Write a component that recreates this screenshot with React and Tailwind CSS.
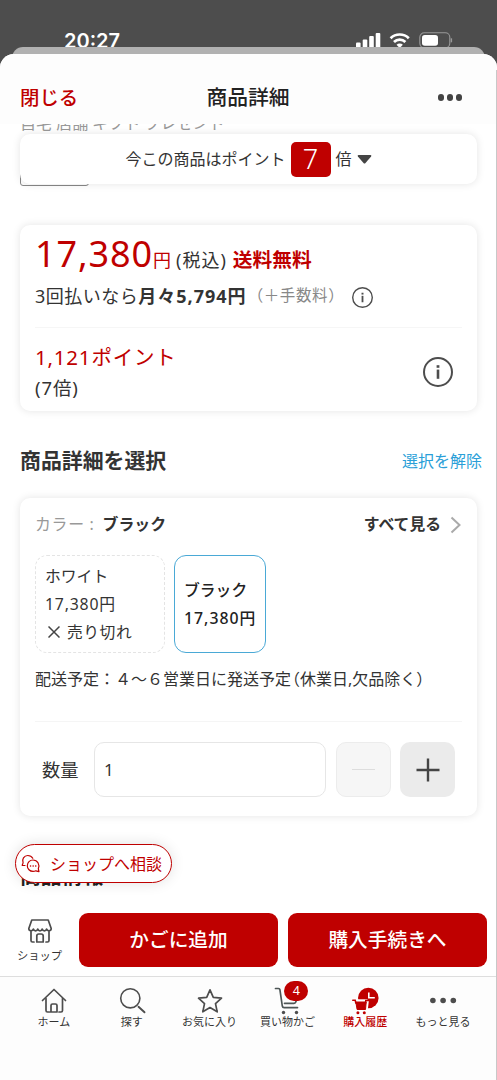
import React, { useState } from "react";

function InfoIcon({ size, stroke }) {
  return (
    <svg width={size} height={size} viewBox="0 0 30 30" fill="none" stroke="#4d4d4d" strokeWidth={stroke}>
      <circle cx="15" cy="15" r="14" />
      <path d="M15 12.6v9.2" strokeWidth={stroke * 1.3} />
      <path d="M15 8.2v2.6" strokeWidth={stroke * 1.4} />
    </svg>
  );
}

function StatusIcons() {
  return (
    <svg className="absolute left-[355px] top-[30px]" width="100" height="20" viewBox="0 0 100 20">
      <g fill="#fff">
        <rect x="1" y="12.5" width="4.6" height="8" rx="1" />
        <rect x="7.7" y="9.5" width="4.6" height="11" rx="1" />
        <rect x="14.2" y="6" width="4.6" height="14" rx="1" />
        <rect x="20.7" y="3" width="4.6" height="17" rx="1" />
      </g>
      <g fill="none" stroke="#fff" strokeWidth="2.7">
        <path d="M35.6 8.2a13 13 0 0 1 18.2 0" />
        <path d="M39 12a8 8 0 0 1 11.4 0" />
      </g>
      <path d="M41.5 14.8a4.6 4.6 0 0 1 6.4 0L44.7 18z" fill="#fff" />
      <rect x="64.8" y="2.8" width="30" height="15" rx="4.5" fill="none" stroke="#999" strokeWidth="1.1" />
      <rect x="67" y="5" width="16" height="10.8" rx="2.8" fill="#fff" />
      <path d="M96.4 8.3v4" stroke="#999" strokeWidth="1.4" />
    </svg>
  );
}

function ShopIcon() {
  return (
    <svg width="26" height="26" viewBox="0 0 26 26" fill="none" stroke="#4d4d4d" strokeWidth="1.7" strokeLinecap="round" strokeLinejoin="round">
      <path d="M4.8 2h16.4l3 8.500c0 2.800-3.900 3-4.600.6-.8 2.400-3.600 2.400-4.400 0-.8 2.400-3.600 2.400-4.400 0-.8 2.400-3.600 2.400-4.400 0-.7 2.400-4.600 2.200-4.600-.6z" />
      <path d="M4 13.500v9q0 1.500 1.500 1.500H7M22 13.500v9q0 1.500-1.500 1.500H19M9.800 24v-6q0-2 2-2h2.400q2 0 2 2v6z" />
    </svg>
  );
}

function ChatIcon() {
  return (
    <svg width="20" height="20" viewBox="0 0 20 20" fill="none" stroke="#bf0000" strokeWidth="1.2" strokeLinecap="round" strokeLinejoin="round">
      <path d="M4 11.500 1.200 11.300l.9-2.400C.6 5.500 3 1.500 6.800 1.500c2.300 0 4 1.100 5 2.800" />
      <path d="M12 6a5.700 5.700 0 1 0 0 11.400c1.100 0 2-.2 2.800-.6l3.200.8-.7-2.900C19 10.600 16.600 6 12 6z" />
      <path d="M9.500 11.900h.1M12.100 11.900h.1M14.700 11.900h.1" strokeWidth="1.500" />
    </svg>
  );
}

const tabIcons = {
  home: (
    <svg width="28" height="28" viewBox="0 0 28 28" fill="none" stroke="#4d4d4d" strokeWidth="1.7" strokeLinecap="round" strokeLinejoin="round">
      <path d="M2.500 13.500 14 2.500l11.500 11" />
      <path d="M6 11.500v12q0 1.500 1.500 1.500h2M22.500 11.500v12q0 1.500-1.500 1.500h-2M11 25v-6.500q0-1.500 1.500-1.500h3q1.500 0 1.500 1.500V25z" />
    </svg>
  ),
  search: (
    <svg width="28" height="28" viewBox="0 0 28 28" fill="none" stroke="#4d4d4d" strokeWidth="1.6" strokeLinecap="round">
      <circle cx="12.300" cy="11.300" r="9.600" />
      <path d="m20.500 19.800 6 5.500" strokeWidth="1.900" />
    </svg>
  ),
  star: (
    <svg width="28" height="28" viewBox="0 0 28 28" fill="none" stroke="#4d4d4d" strokeWidth="1.700" strokeLinejoin="round">
      <path d="m14 2.800 3.300 7.500 8.200.9-6 5.500 1.700 8.100-7.200-4.200-7.200 4.200 1.700-8.100-6-5.500 8.200-.9z" />
    </svg>
  ),
  cart: (
    <svg width="28" height="28" viewBox="0 0 28 28" fill="none" stroke="#4d5656" strokeWidth="1.700" strokeLinecap="round" strokeLinejoin="round">
      <path d="M2.500 1.500h3q1.200 0 1.400 1.200L9.300 19q.3 1.600 1.800 1.600H24.500M11.500 16.300H21q1.500 0 1.900-1.500l2.100-8" />
      <circle cx="10.500" cy="25.500" r="1.700" fill="#4d4d4d" stroke="none" />
      <circle cx="23.500" cy="25.500" r="1.700" fill="#4d4d4d" stroke="none" />
    </svg>
  ),
  history: (
    <svg width="28" height="28" viewBox="0 0 28 28" fill="none">
      <circle cx="17.300" cy="11" r="10.300" fill="#bf0000" />
      <path d="M17.800 5.500v5.300h6" stroke="#fff" strokeWidth="1.600" />
      <path d="M1.500 13h3l1.800 9.500h8.700l1-8.500" stroke="#fff" strokeWidth="3.600" />
      <path d="M5 14h11.500" stroke="#fff" strokeWidth="3.400" />
      <path d="M1.800 13.200h2.400l.6 2.800h9.700l.3-2.500h2" stroke="#bf0000" strokeWidth="1.600" strokeLinecap="round" />
      <path d="M4.800 15h10.400l-.7 7.500H6.100z" fill="#bf0000" stroke="#bf0000" strokeLinejoin="round" />
      <circle cx="6.900" cy="25.700" r="1.500" fill="#bf0000" />
      <circle cx="13.300" cy="25.700" r="1.500" fill="#bf0000" />
    </svg>
  ),
  more: (
    <svg width="28" height="28" viewBox="0 0 28 28" fill="#4d4d4d">
      <circle cx="3.900" cy="13.500" r="2.800" />
      <circle cx="14.100" cy="13.500" r="2.800" />
      <circle cx="24.300" cy="13.500" r="2.800" />
    </svg>
  ),
};

const tabs = [
  { id: "home", label: "ホーム" },
  { id: "search", label: "探す" },
  { id: "star", label: "お気に入り" },
  { id: "cart", label: "買い物かご", badge: 4 },
  { id: "history", label: "購入履歴", active: true },
  { id: "more", label: "もっと見る" },
];

function Header() {
  return (
    <header className="flex h-[70px] shrink-0 items-center justify-between rounded-t-[14px] bg-[#fdfdfd] pr-[35px] pl-5 pt-[17px]">
      <button className="w-20 text-left text-[19.400px] font-medium text-[#bf0000]">閉じる</button>
      <h1 className="pl-[14px] text-[20.800px] font-medium text-[#222]">商品詳細</h1>
      <button className="flex w-20 justify-end gap-[2.500px]">
        <span className="size-[6.500px] rounded-full bg-[#444]" />
        <span className="size-[6.500px] rounded-full bg-[#444]" />
        <span className="size-[6.500px] rounded-full bg-[#444]" />
      </button>
    </header>
  );
}

function PriceCard() {
  return (
    <section className="mr-5 ml-5 mt-[39px] h-[186px] shrink-0 rounded-[10px] bg-white px-[15px] shadow-[0_0_8px_rgba(0,0,0,0.11)]">
      <div className="flex h-[103px] flex-col border-b border-[#f6f6f6] pt-2">
        <div className="flex h-[43px] items-baseline whitespace-nowrap leading-[42px]">
          <span className="text-[36px] tracking-[0.900px] text-[#bf0000]">17,380</span>
          <span className="text-[18px] text-[#bf0000]">円</span>
          <span className="ml-[5px] text-[18px] tracking-[1px]">(税込)</span>
          <span className="ml-[6px] text-[19.700px] font-bold text-[#bf0000]">送料無料</span>
        </div>
        <div className="flex h-10 items-center whitespace-nowrap">
          <span className="text-[18px] tracking-[0.500px]">3回払いなら</span>
          <span className="text-[18px] font-bold tracking-[1px]">月々5,794円</span>
          <span className="ml-px text-[15.500px] tracking-[0.600px] text-[#888]">（＋手数料）</span>
          <span className="ml-2 pt-[2px]">
            <InfoIcon size={21} stroke={2} />
          </span>
        </div>
      </div>
      <div className="flex h-[83px] items-center justify-between pr-[9px]">
        <div className="flex flex-col pt-[6px]">
          <span className="h-[31px] text-[20.500px] leading-[31px] tracking-[0.800px] text-[#bf0000]">1,121ポイント</span>
          <span className="h-[30px] text-[18.500px] leading-[30px] tracking-[0.900px]">(7倍)</span>
        </div>
        <span className="pt-1">
          <InfoIcon size={30} stroke={2} />
        </span>
      </div>
    </section>
  );
}

function OptionCard() {
  const [count, setCount] = useState(1);

  return (
    <section className="mx-5 h-[318px] shrink-0 rounded-[10px] bg-white px-[15px] shadow-[0_0_8px_rgba(0,0,0,0.11)]">
      <div className="flex h-[57px] items-center justify-between pb-1">
        <p className="text-[15.900px] font-medium">
          <span className="mr-2 font-normal tracking-[0.700px] text-[#999]">カラー :</span>
          <span className="font-bold">ブラック</span>
        </p>
        <button className="flex items-center gap-[9px] text-[15.800px] font-bold">
          すべて見る
          <svg width="12" height="18" viewBox="0 0 12 18" fill="none" stroke="#aaa" strokeWidth="2">
            <path d="m1.500 1.500 8 7.500-8 7.500" />
          </svg>
        </button>
      </div>
      <div className="flex h-[98px] gap-[9px] text-[15.800px] leading-7">
        <button className="w-[130px] rounded-[12px] border border-dashed border-[#e4e4e4] pl-[9px] text-left">
          <span className="block">ホワイト</span>
          <span className="block tracking-[0.800px]">17,380円</span>
          <span className="flex items-center gap-[7px] pl-[3px]">
            <svg width="12" height="12" viewBox="0 0 12 12" stroke="#444" strokeWidth="1.500">
              <path d="m.5.5 11 11M11.500.5l-11 11" />
            </svg>
            <span className="tracking-[0.500px]">売り切れ</span>
          </span>
        </button>
        <button className="w-[92px] rounded-[12px] border-[1.500px] border-[#4aa9d6] pb-px pl-[9px] text-left font-medium whitespace-nowrap text-[#222]">
          <span className="block">ブラック</span>
          <span className="block tracking-[1px]">17,380円</span>
        </button>
      </div>
      <p className="h-[69px] border-b border-[#f5f5f5] pt-[14px] text-[16px] leading-6 whitespace-nowrap">
        配送予定：４〜６営業日に発送予定<span className="-ml-[7px]">（休業日,欠品除く）</span>
      </p>
      <div className="flex items-center pt-5 pl-[7px]">
        <label className="w-[52px] shrink-0 text-[18.300px]">数量</label>
        <input
          className="h-[55px] w-[232px] shrink-0 rounded-[10px] border border-[#e6e6e6] px-[9px] text-[17px] outline-none"
          value={count}
          onChange={(e) => setCount(Number(e.target.value) || 1)}
        />
        <button
          className="ml-[10px] flex size-[55px] shrink-0 items-center justify-center rounded-[10px] border border-[#ececec] bg-[#f6f6f6]"
          onClick={() => setCount(Math.max(1, count - 1))}
        >
          <span className="h-[1.500px] w-[23px] bg-[#ddd]" />
        </button>
        <button
          className="ml-[9px] flex size-[55px] shrink-0 items-center justify-center rounded-[10px] bg-[#ebebeb]"
          onClick={() => setCount(count + 1)}
        >
          <svg width="24" height="24" viewBox="0 0 24 24" stroke="#444" strokeWidth="2.400">
            <path d="M12 .5v23M.5 12h23" />
          </svg>
        </button>
      </div>
    </section>
  );
}

function TabBar() {
  return (
    <nav className="flex h-[104px] shrink-0 border-t-[1.500px] border-[#dedede] bg-[#fdfdfd] px-[15px] pt-[10px]">
      {tabs.map((tab) => (
        <a key={tab.id} className={`flex flex-1 flex-col items-center text-[11px] ${tab.active ? "font-medium text-[#bf0000]" : ""}`}>
          <span className="relative h-7">
            {tabIcons[tab.id]}
            {tab.badge && (
              <span className="absolute -top-[6px] left-[11px] flex h-5 w-6 items-center justify-center rounded-full bg-[#bf0000] text-[12.500px] text-white">
                {tab.badge}
              </span>
            )}
          </span>
          <span className="-mt-px leading-4 whitespace-nowrap">{tab.label}</span>
        </a>
      ))}
    </nav>
  );
}

export default function App() {
  return (
    <div className="relative flex h-[1080px] w-[497px] flex-col overflow-hidden bg-[#4d4d4d] font-['Noto_Sans','Noto_Sans_CJK_JP',sans-serif] text-[#333]">
      <div className="relative h-[47px] shrink-0 overflow-hidden">
        <span className="absolute top-[27px] left-16 font-['Inter','Noto_Sans',sans-serif] text-[20px] leading-7 font-semibold text-white">20:27</span>
        <StatusIcons />
      </div>
      {/* sheet underneath */}
      <div className="mx-3 -mb-[13px] h-5 shrink-0 rounded-t-[11px] bg-[#b1b1b1]" />

      <main className="relative flex flex-1 flex-col rounded-t-[14px] bg-white">
        <Header />
        <div className="h-[10px] shrink-0 overflow-hidden pl-5">
          <p className="-mt-[13px] text-[16px] leading-6 text-[#999]">自宅 店舗 ギフト プレゼント</p>
        </div>
        <div className="relative z-10 mx-5 flex h-[50px] shrink-0 items-center justify-center rounded-[10px] bg-white text-[16px] shadow-[0_0_8px_rgba(0,0,0,0.11)]">
          今この商品はポイント
          <span className="mx-[5px] flex h-[35px] w-10 items-center justify-center rounded-[5px] bg-[#bf0000] text-[27px] font-light text-white">7</span>
          倍
          <svg className="ml-[5px]" width="15" height="9" viewBox="0 0 15 9" fill="#444">
            <path d="M1.500 0h12q1.500.2.600 1.500L8.500 8q-1 1-2 0L.9 1.500Q0 .2 1.500 0z" />
          </svg>
        </div>
        <div className="ml-5 -mt-[10px] h-3 w-[69px] shrink-0 rounded-b-[3px] border border-[#888]" />

        <PriceCard />

        <div className="flex h-[87px] shrink-0 items-center justify-between pt-3 pr-[15px] pl-5">
          <h2 className="text-[20.900px] font-bold">商品詳細を選択</h2>
          <button className="text-[16px] text-[#2b9fd8]">選択を解除</button>
        </div>

        <OptionCard />

        <div className="relative h-[87px] shrink-0 pt-[46px] pl-5">
          <h2 className="text-[20.800px] leading-7 font-bold text-[#222]">商品情報</h2>
          <button className="absolute top-7 left-[15px] flex h-[39px] w-[157px] items-center gap-[10px] rounded-full border-[1.500px] border-[#bf0000] bg-white pl-[5px] text-[16px] whitespace-nowrap text-[#bf0000] shadow-[0_0_14px_rgba(0,0,0,0.12)]">
            <ChatIcon />
            <span className="-ml-px">ショップへ相談</span>
          </button>
        </div>

        <div className="flex h-[73px] shrink-0 pt-[10px]">
          <a className="flex w-[79px] flex-col items-center pt-[5px] text-[11.300px]">
            <ShopIcon />
            <span className="mt-[2px] leading-5">ショップ</span>
          </a>
          <button className="h-[54px] w-[199px] rounded-[9px] bg-[#bf0000] text-[19.700px] font-medium text-white">かごに追加</button>
          <button className="ml-[10px] h-[54px] w-[199px] rounded-[9px] bg-[#bf0000] text-[19.700px] font-medium text-white">購入手続きへ</button>
        </div>

        <TabBar />
        <div className="pointer-events-none absolute top-4 right-0 bottom-0 w-px bg-[#c8c8c8]" />
      </main>
    </div>
  );
}
